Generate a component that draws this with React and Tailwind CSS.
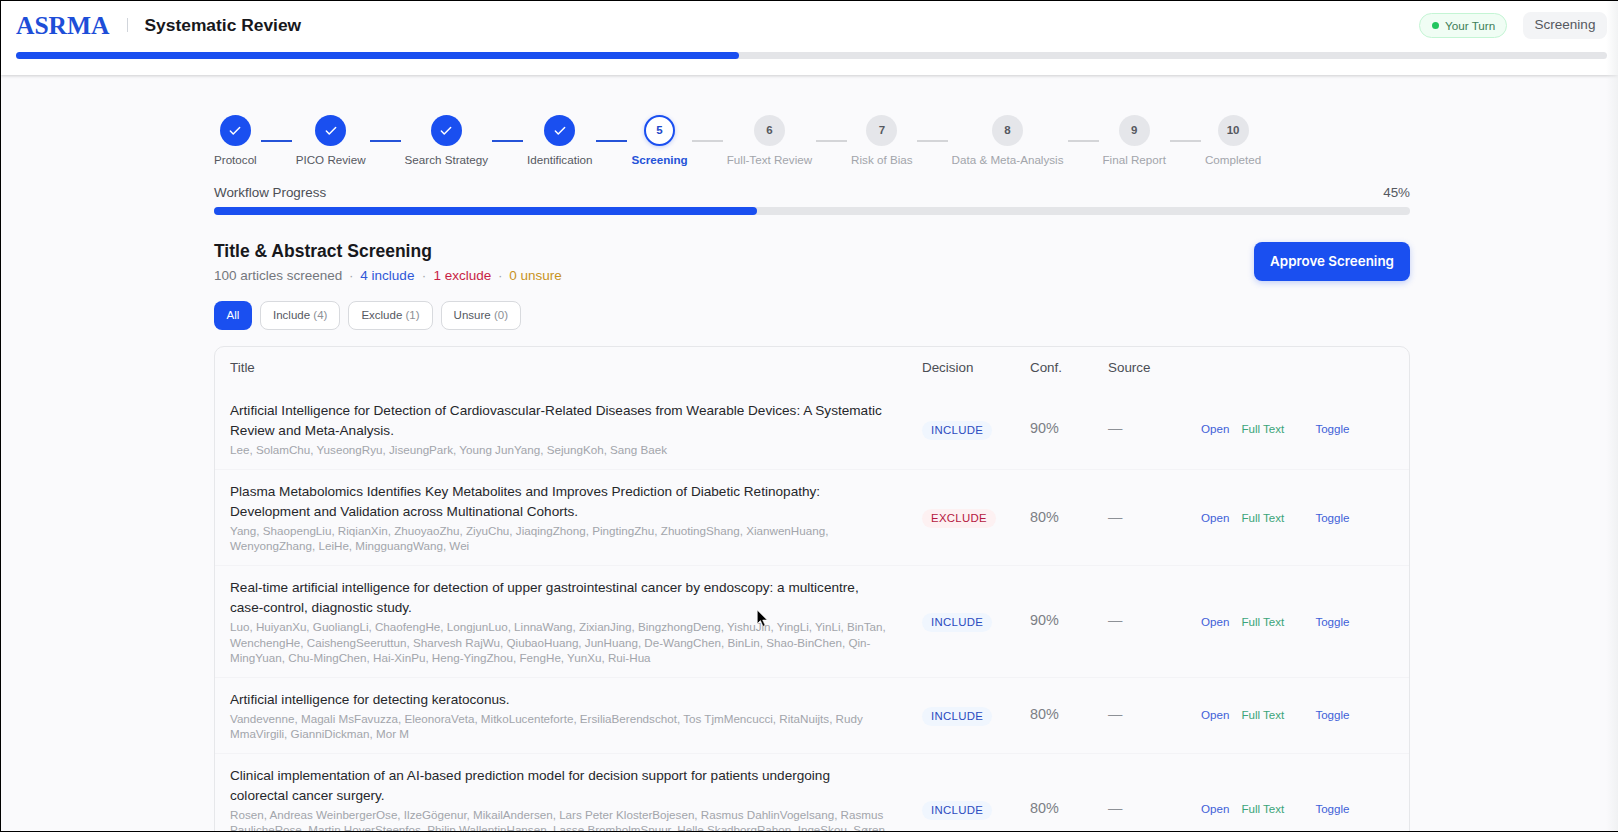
import React from "react";
import { Check } from "lucide-react";

const FONT = "font-['Liberation_Sans',_Arial,_sans-serif]";
const ROW = "grid grid-cols-[691px_108px_78px_93px_1fr]";

const steps = [
  { n: 1, label: "Protocol", s: "done" },
  { n: 2, label: "PICO Review", s: "done" },
  { n: 3, label: "Search Strategy", s: "done" },
  { n: 4, label: "Identification", s: "done" },
  { n: 5, label: "Screening", s: "current" },
  { n: 6, label: "Full-Text Review", s: "todo" },
  { n: 7, label: "Risk of Bias", s: "todo" },
  { n: 8, label: "Data & Meta-Analysis", s: "todo" },
  { n: 9, label: "Final Report", s: "todo" },
  { n: 10, label: "Completed", s: "todo" },
];

const rows = [
  {
    title: "Artificial Intelligence for Detection of Cardiovascular-Related Diseases from Wearable Devices: A Systematic Review and Meta-Analysis.",
    authors: "Lee, SolamChu, YuseongRyu, JiseungPark, Young JunYang, SejungKoh, Sang Baek",
    decision: "INCLUDE", conf: "90%",
  },
  {
    title: "Plasma Metabolomics Identifies Key Metabolites and Improves Prediction of Diabetic Retinopathy: Development and Validation across Multinational Cohorts.",
    authors: "Yang, ShaopengLiu, RiqianXin, ZhuoyaoZhu, ZiyuChu, JiaqingZhong, PingtingZhu, ZhuotingShang, XianwenHuang, WenyongZhang, LeiHe, MingguangWang, Wei",
    decision: "EXCLUDE", conf: "80%",
  },
  {
    title: "Real-time artificial intelligence for detection of upper gastrointestinal cancer by endoscopy: a multicentre, case-control, diagnostic study.",
    authors: "Luo, HuiyanXu, GuoliangLi, ChaofengHe, LongjunLuo, LinnaWang, ZixianJing, BingzhongDeng, YishuJin, YingLi, YinLi, BinTan, WenchengHe, CaishengSeeruttun, Sharvesh RajWu, QiubaoHuang, JunHuang, De-WangChen, BinLin, Shao-BinChen, Qin-MingYuan, Chu-MingChen, Hai-XinPu, Heng-YingZhou, FengHe, YunXu, Rui-Hua",
    decision: "INCLUDE", conf: "90%",
  },
  {
    title: "Artificial intelligence for detecting keratoconus.",
    authors: "Vandevenne, Magali MsFavuzza, EleonoraVeta, MitkoLucenteforte, ErsiliaBerendschot, Tos TjmMencucci, RitaNuijts, Rudy MmaVirgili, GianniDickman, Mor M",
    decision: "INCLUDE", conf: "80%",
  },
  {
    title: "Clinical implementation of an AI-based prediction model for decision support for patients undergoing colorectal cancer surgery.",
    authors: "Rosen, Andreas WeinbergerOse, IlzeGögenur, MikailAndersen, Lars Peter KlosterBojesen, Rasmus DahlinVogelsang, Rasmus PaulicheRose, Martin HoyerSteenfos, Philip WallentinHansen, Lasse BromholmSpuur, Helle SkadborgRahon, IngeSkou, Søren Laurberg",
    decision: "INCLUDE", conf: "80%",
  },
];

function StepCircle({ step }) {
  if (step.s === "done") {
    return (
      <div className="w-[31px] h-[31px] rounded-full bg-[#1a4ff0] flex items-center justify-center text-white">
        <Check size={14} strokeWidth={2.5} />
      </div>
    );
  }
  if (step.s === "current") {
    return (
      <div className="w-[31px] h-[31px] rounded-full bg-white border-2 border-[#1a4ff0] shadow-[0_1px_4px_rgba(26,79,240,0.25)] flex items-center justify-center text-[11.5px] font-bold text-[#2148c8]">
        {step.n}
      </div>
    );
  }
  return (
    <div className="w-[31px] h-[31px] rounded-full bg-[#e5e6ea] flex items-center justify-center text-[11.5px] font-bold text-[#55585f]">
      {step.n}
    </div>
  );
}

function Stepper() {
  return (
    <div className="flex items-start gap-1">
      {steps.map((step, i) => (
        <React.Fragment key={step.n}>
          <div className="flex flex-col items-center gap-[6px]">
            <StepCircle step={step} />
            <span
              className={
                "text-[11.65px] leading-[16px] whitespace-nowrap " +
                (step.s === "done"
                  ? "text-[#55585f]"
                  : step.s === "current"
                  ? "text-[#2553d8] font-bold"
                  : "text-[#a2a5ab]")
              }
            >
              {step.label}
            </span>
          </div>
          {i < steps.length - 1 && (
            <div
              className={
                "w-[31px] h-[2px] mt-[25px] " +
                (i < 4 ? "bg-[#2553d8]" : "bg-[#d4d5d8]")
              }
            />
          )}
        </React.Fragment>
      ))}
    </div>
  );
}

function Badge({ decision }) {
  const inc = decision === "INCLUDE";
  return (
    <span
      className={
        "inline-flex items-center h-[19px] px-[9px] rounded-full text-[11.4px] tracking-[0.3px] " +
        (inc ? "bg-[#f0f6fe] text-[#2b4bc0]" : "bg-[#fdf1f2] text-[#b5173f]")
      }
    >
      {decision}
    </span>
  );
}

function Filter({ label, count }) {
  return (
    <button className="h-[29px] px-3 rounded-lg bg-white border border-[#d8dade] text-[11.5px] text-[#55585f]">
      {label} <span className="text-[#8d9096]">({count})</span>
    </button>
  );
}

export default function App() {
  return (
    <div className={"h-screen overflow-hidden border-t border-l border-b border-black bg-[#fafafc] relative " + FONT}>
      <header className="h-[74px] bg-white shadow-[0_1px_3px_rgba(0,0,0,0.18)] pl-[15px] pr-[11px] pt-[11px] relative">
        <div className="flex items-center justify-between h-[27px]">
          <div className="flex items-center">
            <span className="font-['Liberation_Serif',_serif] font-bold text-[25.5px] leading-none text-[#1d4ed8]">
              ASRMA
            </span>
            <span className="w-px h-[14px] bg-[#d1d5db] ml-[17px] mr-[17px]" />
            <span className="text-[17.4px] font-bold text-[#17181c]">Systematic Review</span>
          </div>
          <div className="flex items-center gap-4">
            <div className="flex items-center gap-[6px] h-[25px] w-[88px] pl-[12px] rounded-full bg-[#f0fdf4] border border-[#c4f5d4]">
              <span className="w-[7px] h-[7px] rounded-full bg-[#22c55e]" />
              <span className="text-[11.7px] text-[#3f7d58]">Your Turn</span>
            </div>
            <div className="h-[27px] w-[84px] flex items-center justify-center rounded-lg bg-[#f3f4f6] text-[13.5px] text-[#55585f]">
              Screening
            </div>
          </div>
        </div>
        <div className="mt-[13px] h-[7px] rounded-full bg-[#e4e5e8]">
          <div className="h-full w-[723px] rounded-full bg-[#1a4ff0]" />
        </div>
      </header>

      <main className="w-[1196px] ml-[213px] pt-[40px]">
        <Stepper />

        <div className="mt-[16px] flex items-center justify-between text-[13.4px] leading-[18px] text-[#4b4e55]">
          <span>Workflow Progress</span>
          <span className="text-[#55585f]">45%</span>
        </div>
        <div className="mt-[5px] h-[8px] rounded-full bg-[#e4e5e8]">
          <div className="h-full w-[543px] rounded-full bg-[#1a4ff0]" />
        </div>

        <div className="mt-[26px] flex items-start justify-between">
          <div>
            <h1 className="text-[17.5px] leading-[18px] mt-[1px] font-bold text-[#17181c]">
              Title &amp; Abstract Screening
            </h1>
            <p className="mt-[7px] text-[13.5px] leading-[18px] text-[#74777d]">
              100 articles screened <span className="mx-[3px] text-[#a2a5ab]">·</span>{" "}
              <span className="text-[#2f57d8]">4 include</span>{" "}
              <span className="mx-[3.5px] text-[#a2a5ab]">·</span>{" "}
              <span className="text-[#c81e45]">1 exclude</span>{" "}
              <span className="mx-[3px] text-[#a2a5ab]">·</span>{" "}
              <span className="text-[#c8931e]">0 unsure</span>
            </p>
          </div>
          <button className="h-[39px] w-[156px] mt-[1px] rounded-lg bg-[#1a4ff0] text-white font-['Inter',_sans-serif] text-[13.4px] font-semibold shadow-[0_2px_6px_rgba(26,79,240,0.25)]">
            Approve Screening
          </button>
        </div>

        <div className="mt-[16px] flex items-center gap-2">
          <button className="h-[29px] w-[38px] rounded-lg bg-[#1a4ff0] text-white text-[11.5px]">All</button>
          <Filter label="Include" count={4} />
          <Filter label="Exclude" count={1} />
          <Filter label="Unsure" count={0} />
        </div>

        <section className="mt-[16px] rounded-[10px] border border-[#e6e7ea] bg-[#fafafc]">
          <div className={ROW + " h-[42px] items-center text-[13.4px] text-[#4b4e55]"}>
            <span className="pl-[15px]">Title</span>
            <span className="pl-4">Decision</span>
            <span className="pl-4">Conf.</span>
            <span className="pl-4">Source</span>
            <span />
          </div>
          {rows.map((r, i) => (
            <div key={i} className={ROW + " items-center border-b border-[#f3f3f6]"}>
              <div className="pl-[15px] pr-4 pt-[12.2px] pb-[11.2px]">
                <div className="text-[13.6px] leading-[20px] text-[#26272b]">{r.title}</div>
                <div className="mt-[1px] text-[11.65px] leading-[15.4px] text-[#a2a5ab]">{r.authors}</div>
              </div>
              <div className="pl-4"><Badge decision={r.decision} /></div>
              <div className="pl-4 text-[14.4px] text-[#7c7f85]">{r.conf}</div>
              <div className="pl-4 text-[14.4px] text-[#8d9096]">—</div>
              <div className="pl-4 flex items-center gap-[12px] text-[11.6px]">
                <span className="text-[#3f5fd8]">Open</span>
                <span className="w-[62px] text-[#3aa57a]">Full Text</span>
                <span className="text-[#3f5fd8]">Toggle</span>
              </div>
            </div>
          ))}
        </section>
      </main>

      <div className="absolute right-0 top-0 bottom-0 w-[12px] bg-gradient-to-r from-transparent to-[#eceeef] pointer-events-none opacity-70" />

      <svg className="absolute left-[755px] top-[608px]" width="13" height="19" viewBox="0 0 12 18">
        <path d="M1 1 L1 14 L4 11 L6.5 16.5 L8.5 15.5 L6.2 10.5 L10.5 10.5 Z" fill="#000" stroke="#fff" strokeWidth="0.6" />
      </svg>
    </div>
  );
}
